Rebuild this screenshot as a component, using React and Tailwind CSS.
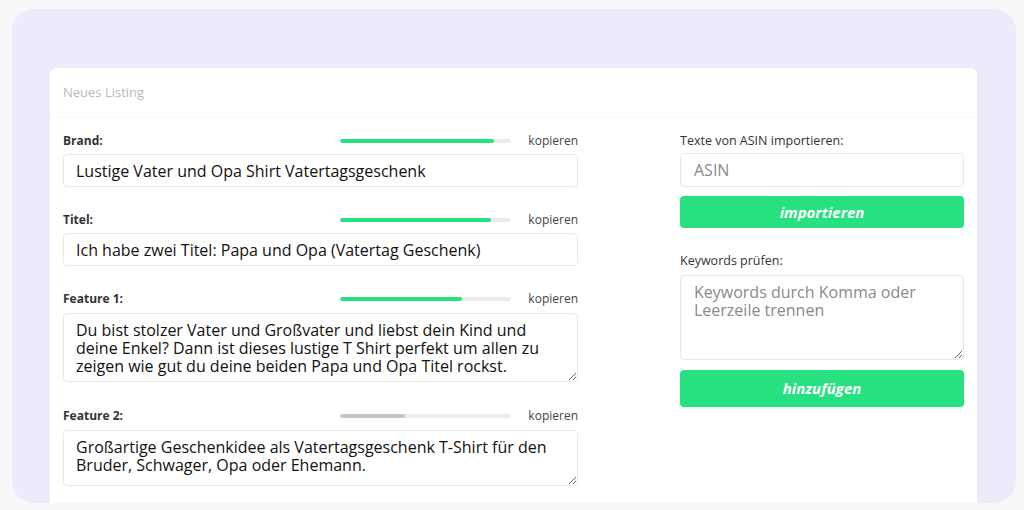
import React from "react";

const font = { fontFamily: "'Open Sans', 'Noto Sans', sans-serif" };

function Bar({ pct, color }) {
  return (
    <div className="w-[171px] h-[4px] rounded-full bg-[#ececec] overflow-hidden">
      <div className={`h-full rounded-full ${color}`} style={{ width: pct + "%" }} />
    </div>
  );
}

function LabelRow({ label, pct, color }) {
  return (
    <div className="flex items-center justify-between h-[14px]">
      <span className="text-[12px] font-bold text-[#333]">{label}</span>
      <div className="flex items-center">
        <Bar pct={pct} color={color} />
        <span className="ml-[17px] text-[12px] text-[#444]">kopieren</span>
      </div>
    </div>
  );
}

export default function App() {
  return (
    <div className="w-[1024px] h-[510px] bg-[#f8f8f8] overflow-hidden" style={font}>
      <div className="ml-[12px] mt-[9px] w-[1004px] h-[494px] rounded-[22px] bg-[#ecebfb] overflow-hidden pt-[59px] pl-[38px] pr-[39px]">
        <div className="bg-white rounded-t-[7px] h-[500px]">
          <div className="h-[50px] px-[13px] flex items-center border-b border-[#f8f8f8] text-[13px] text-[#b8b8b8]">
            Neues Listing
          </div>
          <div className="pt-[16px] px-[13px] flex gap-[102px]">
            <div className="w-[515px] flex flex-col">
              <LabelRow label="Brand:" pct={90} color="bg-[#27e07f]" />
              <input
                readOnly
                defaultValue="Lustige Vater und Opa Shirt Vatertagsgeschenk"
                className="mt-[6px] h-[33px] w-full border border-[#e8e8e8] rounded-[4px] px-[12px] text-[16px] text-[#111] outline-none"
                style={font}
              />
              <div className="mt-[26px]">
                <LabelRow label="Titel:" pct={88} color="bg-[#27e07f]" />
              </div>
              <input
                readOnly
                defaultValue="Ich habe zwei Titel: Papa und Opa (Vatertag Geschenk)"
                className="mt-[6px] h-[33px] w-full border border-[#e8e8e8] rounded-[4px] px-[12px] text-[16px] text-[#111] outline-none"
                style={font}
              />
              <div className="mt-[26px]">
                <LabelRow label="Feature 1:" pct={71} color="bg-[#27e07f]" />
              </div>
              <textarea
                readOnly
                defaultValue="Du bist stolzer Vater und Großvater und liebst dein Kind und deine Enkel? Dann ist dieses lustige T Shirt perfekt um allen zu zeigen wie gut du deine beiden Papa und Opa Titel rockst."
                className="mt-[7px] h-[69px] w-full border border-[#e8e8e8] rounded-[4px] px-[12px] pt-[7px] text-[16px] leading-[18px] text-[#111] outline-none block resize-y"
                style={font}
              />
              <div className="mt-[27px]">
                <LabelRow label="Feature 2:" pct={38} color="bg-[#c4c4c4]" />
              </div>
              <textarea
                readOnly
                defaultValue="Großartige Geschenkidee als Vatertagsgeschenk T-Shirt für den Bruder, Schwager, Opa oder Ehemann."
                className="mt-[7px] h-[56px] w-full border border-[#e8e8e8] rounded-[4px] px-[12px] pt-[7px] text-[16px] leading-[18px] text-[#111] outline-none block resize-y"
                style={font}
              />
            </div>
            <div className="w-[284px] flex flex-col">
              <div className="h-[14px] flex items-center text-[12.5px] text-[#333]">Texte von ASIN importieren:</div>
              <input
                readOnly
                placeholder="ASIN"
                className="mt-[5px] h-[34px] w-full border border-[#e8e8e8] rounded-[4px] px-[13px] text-[16px] text-[#111] placeholder:text-[#8a8a8a] outline-none"
                style={font}
              />
              <button className="mt-[9px] h-[32px] w-full rounded-[4px] bg-[#27e07f] text-white text-[15px] font-bold italic" style={font}>
                importieren
              </button>
              <div className="mt-[26px] h-[14px] flex items-center text-[12.5px] text-[#333]">Keywords prüfen:</div>
              <textarea
                readOnly
                placeholder="Keywords durch Komma oder Leerzeile trennen"
                className="mt-[7px] h-[85px] w-full border border-[#e8e8e8] rounded-[4px] px-[13px] pt-[7px] text-[16px] leading-[18px] text-[#111] placeholder:text-[#8a8a8a] outline-none block"
                style={font}
              />
              <button className="mt-[10px] h-[37px] w-full rounded-[4px] bg-[#27e07f] text-white text-[15px] font-bold italic" style={font}>
                hinzufügen
              </button>
            </div>
          </div>
        </div>
      </div>
    </div>
  );
}
